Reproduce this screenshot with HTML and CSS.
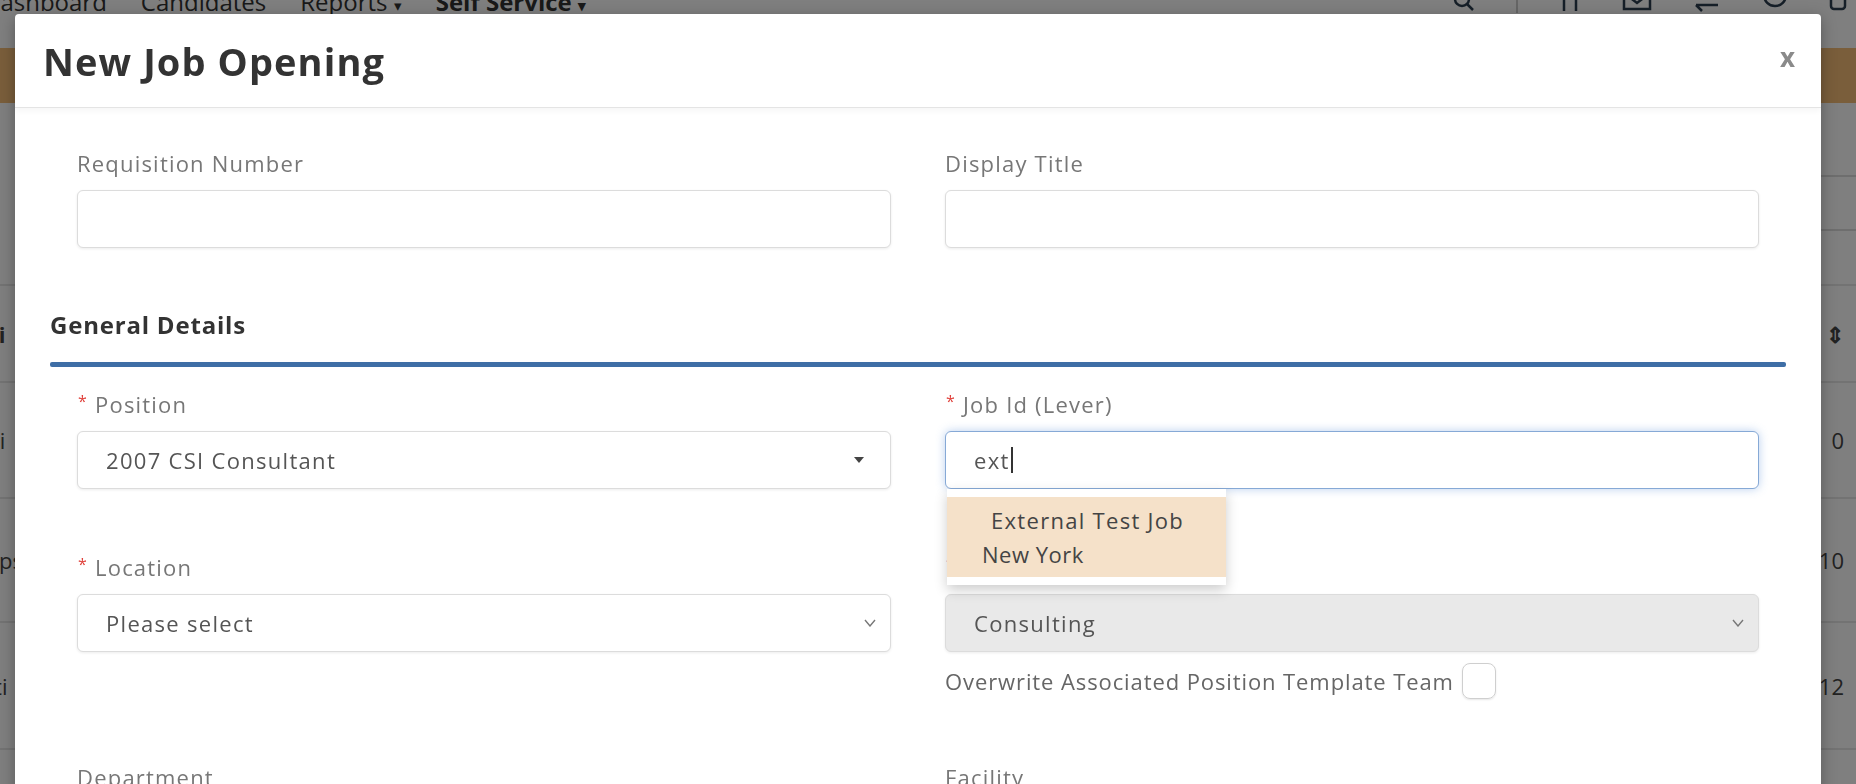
FILE: index.html
```html
<!DOCTYPE html>
<html lang="en">
<head>
    <meta charset="UTF-8">
    <title>New Job Opening</title>
    <link rel="stylesheet" href="styles.css">
</head>
<body>

    <!-- Page behind the modal -->
    <div class="page">
        <nav class="topnav">
            <ul class="menu">
                <li>Dashboard</li>
                <li>Candidates</li>
                <li>Reports <span class="caret">&#9662;</span></li>
                <li class="active">Self Service <span class="caret">&#9662;</span></li>
            </ul>
            <div class="tools">
                <svg width="24" height="24" viewBox="0 0 24 24"><circle cx="10" cy="10" r="7" fill="none" stroke="#2d3e50" stroke-width="2.5"/><line x1="15" y1="15" x2="21" y2="21" stroke="#2d3e50" stroke-width="2.5"/></svg>
                <span class="sep"></span>
                <svg width="24" height="24" viewBox="0 0 24 24"><path d="M6 4 L6 22 M18 4 L18 22" stroke="#2d3e50" stroke-width="2.5"/></svg>
                <svg width="30" height="24" viewBox="0 0 30 24"><rect x="2" y="2" width="26" height="18" fill="none" stroke="#2d3e50" stroke-width="2.5"/><path d="M2 4 L15 14 L28 4" fill="none" stroke="#2d3e50" stroke-width="2.5"/></svg>
                <svg width="30" height="24" viewBox="0 0 30 24"><path d="M4 8 L26 8 M20 2 L26 8 M26 16 L4 16 M10 22 L4 16" fill="none" stroke="#2d3e50" stroke-width="2.5"/></svg>
                <svg width="26" height="24" viewBox="0 0 26 24"><circle cx="13" cy="6" r="11" fill="none" stroke="#2d3e50" stroke-width="2.5"/></svg>
                <svg width="20" height="24" viewBox="0 0 20 24"><rect x="3" y="0" width="14" height="20" rx="3" fill="none" stroke="#2d3e50" stroke-width="2.5"/></svg>
            </div>
        </nav>

        <div class="banner"></div>

        <div class="toolbar">
            <div class="filter-box"></div>
        </div>

        <div class="list">
            <div class="list-row head"><span class="cell-first">Iti</span><span class="cell-last">Date &#8661;</span></div>
            <div class="list-row r1"><span class="cell-first">Eli</span><span class="cell-last">0</span></div>
            <div class="list-row r2"><span class="cell-first">Ops</span><span class="cell-last">10</span></div>
            <div class="list-row r3"><span class="cell-first">Sti</span><span class="cell-last">12</span></div>
        </div>
    </div>

    <div class="backdrop"></div>

    <!-- New job opening modal -->
    <div class="modal">
        <div class="modal-header">
            <h1>New Job Opening</h1>
            <span class="close">x</span>
        </div>

        <div class="modal-body">
            <div class="field-grid">
                <div class="field">
                    <label>Requisition Number</label>
                    <div class="control"></div>
                </div>
                <div class="field">
                    <label>Display Title</label>
                    <div class="control"></div>
                </div>
            </div>

            <h2 class="section-title">General Details</h2>
            <div class="section-line"></div>

            <div class="field-grid">
                <div class="field">
                    <label><span class="req">*</span>Position</label>
                    <div class="control select">
                        <span>2007 CSI Consultant</span>
                        <svg class="tri" width="10" height="6" viewBox="0 0 10 6"><path d="M0 0 L10 0 L5 6 Z" fill="#444"/></svg>
                    </div>
                </div>
                <div class="field">
                    <label><span class="req">*</span>Job Id (Lever)</label>
                    <div class="control focus"><span>ext</span><span class="cursor"></span></div>

                    <div class="autocomplete">
                        <div class="ac-item">
                            <span class="ac-title">External Test Job</span><br>
                            New York
                        </div>
                    </div>
                </div>

                <div class="field">
                    <label><span class="req">*</span>Location</label>
                    <div class="control select">
                        <span>Please select</span>
                        <svg class="chev" width="12" height="8" viewBox="0 0 12 8"><path d="M1 1 L6 7 L11 1" fill="none" stroke="#777" stroke-width="1.4"/></svg>
                    </div>
                </div>
                <div class="field">
                    <label class="covered"><span class="req">*</span></label>
                    <div class="control select disabled">
                        <span>Consulting</span>
                        <svg class="chev" width="12" height="8" viewBox="0 0 12 8"><path d="M1 1 L6 7 L11 1" fill="none" stroke="#777" stroke-width="1.4"/></svg>
                    </div>
                    <div class="check-row">
                        <span>Overwrite Associated Position Template Team</span>
                        <span class="checkbox"></span>
                    </div>
                </div>

                <div class="field">
                    <label>Department</label>
                    <div class="control select"></div>
                </div>
                <div class="field">
                    <label>Facility</label>
                    <div class="control select"></div>
                </div>
            </div>
        </div>
    </div>

</body>
</html>
```

FILE: styles.css
```css
/* Base */
html, body {
    margin: 0;
    height: 100%;
    overflow: hidden;
    font-family: "Open Sans", Arial, sans-serif;
}

body {
    background-color: #fff;
    position: relative;
}

/* Page behind the overlay */
.topnav {
    height: 26px;
    margin-top: -12px;
    display: flex;
    justify-content: space-between;
    align-items: center;
}

.menu {
    display: flex;
    gap: 34px;
    list-style: none;
    margin: 0 0 0 -17px;
    padding: 0;
    font-size: 24px;
    color: #333;
}

.menu .active {
    font-weight: bold;
}

.caret {
    font-size: 15px;
}

.tools {
    display: flex;
    align-items: center;
    gap: 40px;
    padding-right: 8px;
}

.tools .sep {
    width: 2px;
    height: 24px;
    background-color: #ccc;
}

.banner {
    height: 55px;
    margin-top: 34px;
    background-color: #f4bc76;
}

.toolbar {
    height: 181px;
    display: flex;
    justify-content: flex-end;
    align-items: flex-start;
}

.filter-box {
    width: 90px;
    height: 52px;
    margin-top: 72px;
    margin-right: -40px;
    border: 2px solid #ddd;
    border-radius: 6px;
}

.list-row {
    display: flex;
    justify-content: space-between;
    align-items: center;
    border-bottom: 2px solid #e6e6e6;
    font-size: 22px;
    color: #444;
}

.list-row.head {
    height: 95px;
    border-top: 2px solid #e6e6e6;
    font-weight: bold;
}

.list-row.r1 { height: 114px; }
.list-row.r2 { height: 122px; }
.list-row.r3 { height: 125px; }

.cell-first {
    margin-left: -18px;
}

.cell-last {
    margin-right: 12px;
}

/* Dark overlay */
.backdrop {
    position: fixed;
    inset: 0;
    background-color: rgba(0, 0, 0, 0.5);
}

/* Modal */
.modal {
    position: absolute;
    top: 14px;
    left: 15px;
    width: 1806px;
    bottom: -200px;
    background-color: #fff;
    border-radius: 4px 4px 0 0;
    box-shadow: 0 4px 16px rgba(0, 0, 0, 0.3);
}

.modal-header {
    height: 93px;
    display: flex;
    align-items: center;
    justify-content: space-between;
    padding: 0 26px 0 28px;
    border-bottom: 1px solid #e4e4e4;
    box-shadow: 0 3px 6px rgba(0, 0, 0, 0.04);
}

.modal-header h1 {
    margin: 0;
    font-size: 38px;
    font-weight: 700;
    color: #333;
    letter-spacing: 1.1px;
}

.close {
    font-size: 26px;
    font-weight: bold;
    color: #8a8a8a;
    line-height: 1;
    margin-top: -8px;
}

.modal-body {
    padding: 43px 35px 0;
}

.field-grid {
    display: grid;
    grid-template-columns: 1fr 1fr;
    column-gap: 54px;
    row-gap: 66px;
    padding: 0 27px;
}

.field {
    position: relative;
}

.field label {
    display: flex;
    align-items: flex-start;
    height: 24px;
    line-height: 24px;
    margin-bottom: 15px;
    font-size: 22px;
    letter-spacing: 1.2px;
    color: #777;
}

.req {
    color: #e0403a;
    font-size: 16px;
    line-height: 14px;
    margin: 2px 7px 0 1px;
}

/* Inputs and selects */
.control {
    box-sizing: border-box;
    height: 58px;
    display: flex;
    align-items: center;
    justify-content: space-between;
    padding: 0 26px 0 28px;
    border: 1px solid #dcdcdc;
    border-radius: 6px;
    box-shadow: 0 1px 3px rgba(0, 0, 0, 0.08);
    font-size: 22px;
    letter-spacing: 1.3px;
    color: #555;
    background-color: #fff;
}

.control.select .chev {
    margin-right: -12px;
}

.control.disabled {
    background-color: #e9e9e9;
}

.control.focus {
    justify-content: flex-start;
    border-color: #86a9d6;
    box-shadow: 0 0 10px rgba(102, 150, 220, 0.45);
}

.cursor {
    display: inline-block;
    width: 2px;
    height: 26px;
    margin-left: 1px;
    background-color: #333;
}

/* Autocomplete list under Job Id */
.autocomplete {
    position: absolute;
    top: 97px;
    left: 2px;
    width: 279px;
    padding: 8px 0;
    background-color: #fff;
    box-shadow: 0 5px 12px rgba(0, 0, 0, 0.2);
    z-index: 2;
}

.ac-item {
    padding: 6px 10px 6px 35px;
    background-color: #f5e1c9;
    font-size: 22px;
    line-height: 34px;
    letter-spacing: 0.5px;
    color: #444;
}

.ac-title {
    margin-left: 9px;
    letter-spacing: 1.3px;
}

/* Checkbox row */
.check-row {
    display: flex;
    align-items: center;
    gap: 8px;
    margin-top: 11px;
    font-size: 22px;
    letter-spacing: 0.9px;
    color: #666;
}

.checkbox {
    width: 34px;
    height: 36px;
    box-sizing: border-box;
    border: 1px solid #cfcfcf;
    border-radius: 8px;
    box-shadow: 0 1px 2px rgba(0, 0, 0, 0.1);
}

/* Section heading */
.section-title {
    margin: 65px 0 25px;
    font-size: 24px;
    line-height: 24px;
    font-weight: 700;
    letter-spacing: 0.8px;
    color: #333;
}

.section-line {
    height: 5px;
    margin-bottom: 25px;
    background-color: #3e6ea6;
    border-radius: 2px;
}
```
